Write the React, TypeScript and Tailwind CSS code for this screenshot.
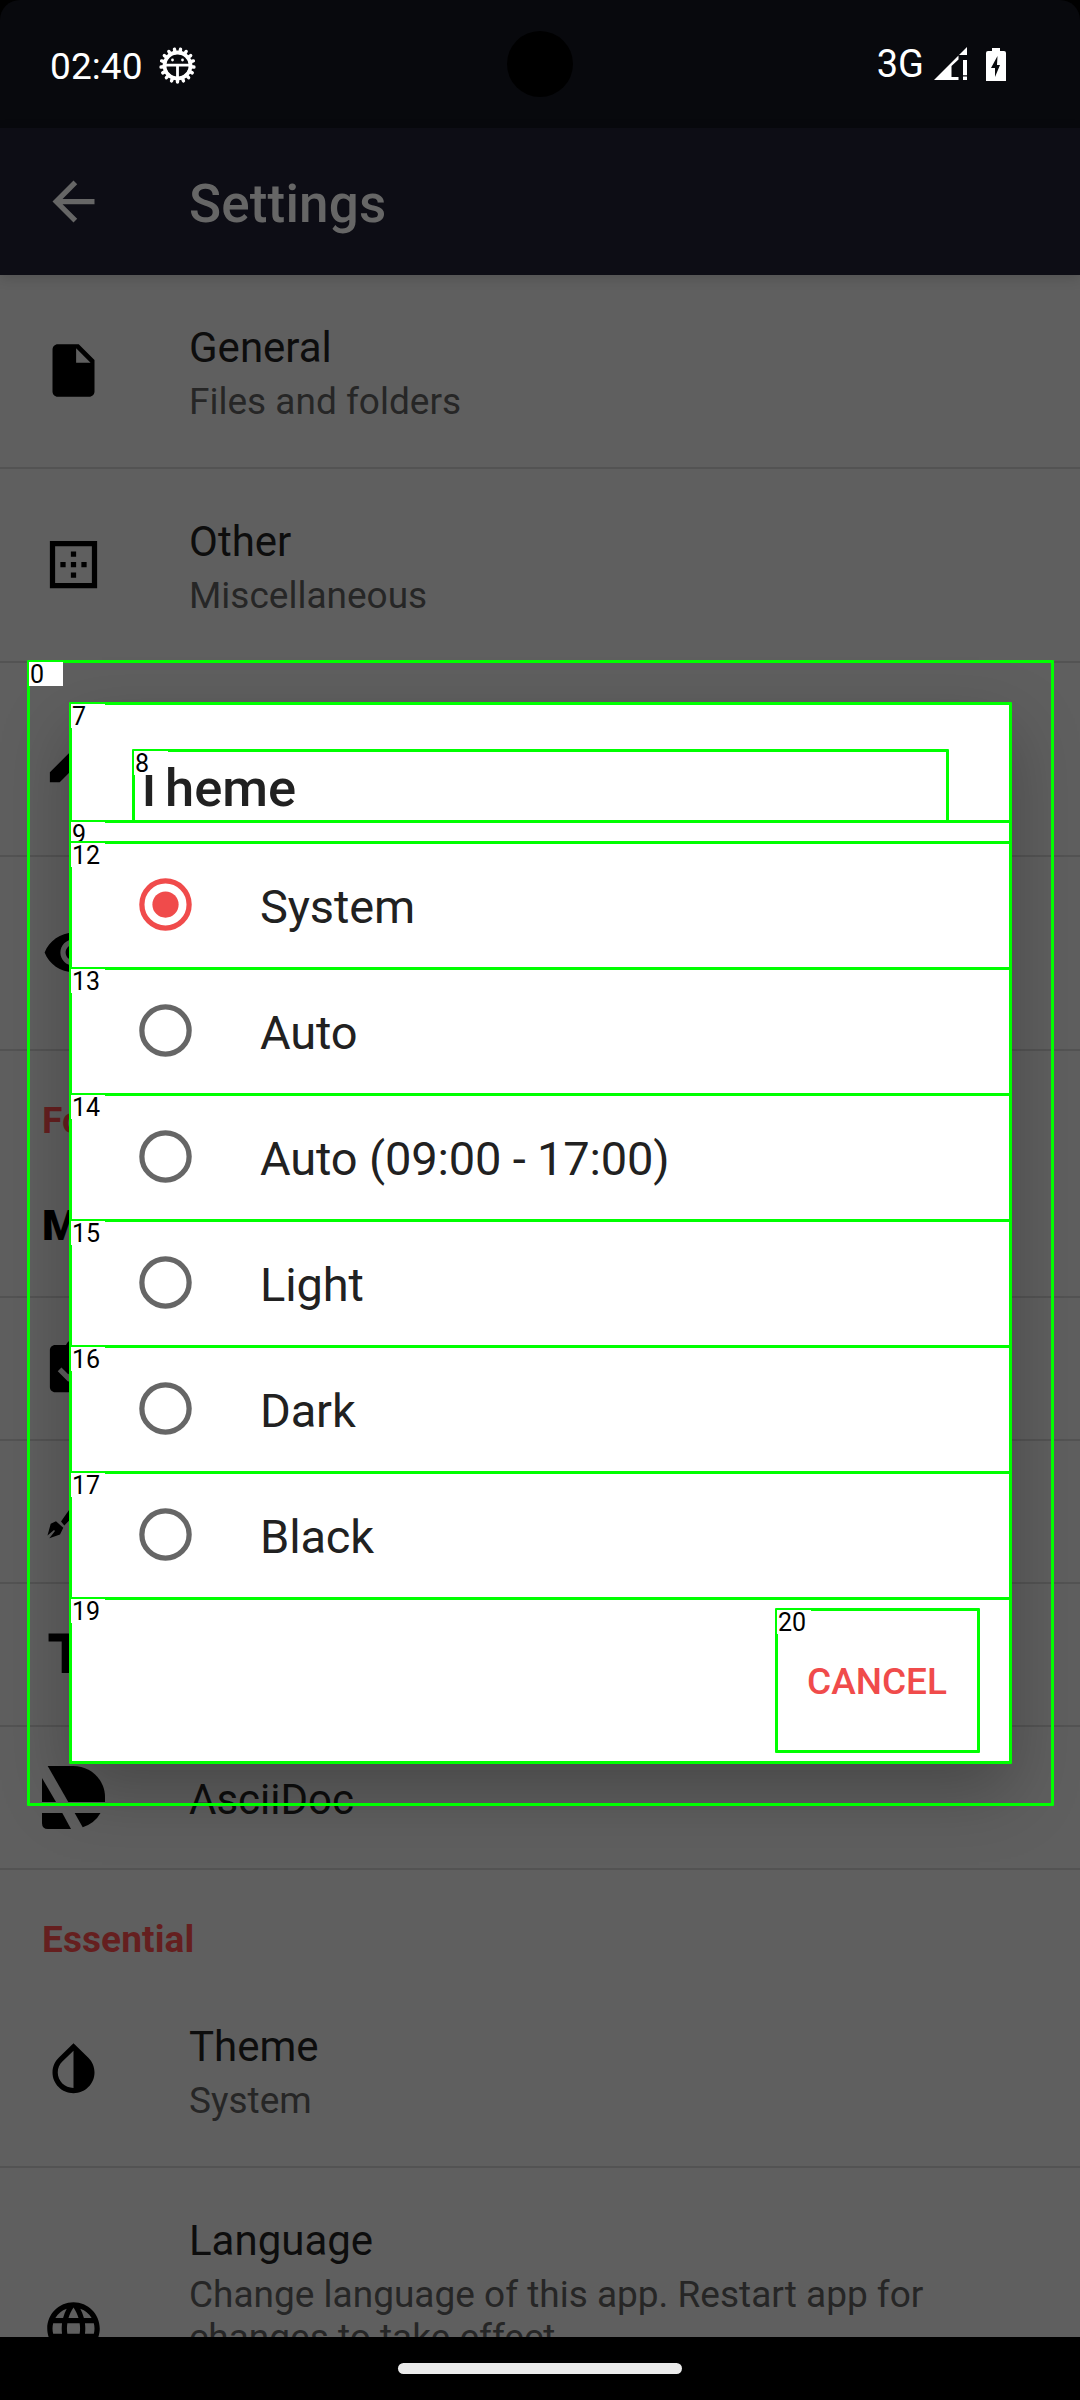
import type { ReactNode } from "react";
import {
  MdArrowBack, MdInsertDriveFile, MdBorderOuter, MdEdit, MdRemoveRedEye,
  MdAssignmentTurnedIn, MdTextFields, MdInvertColors, MdLanguage,
} from "react-icons/md";

const ICON = "size-[63px] text-black";

const TEETH = Array.from({ length: 17 }, (_, i) => (i * 360) / 17);

function DebugIcon() {
  return (
    <svg viewBox="-18.5 -18.5 37 37" className="size-[37px]">
      <circle r="13" fill="none" stroke="#fff" strokeWidth="3.8" />
      {TEETH.map((a) => (
        <path key={a} d="M0 13V16.500" stroke="#fff" strokeWidth="3.4" strokeLinecap="round" transform={`rotate(${a})`} />
      ))}
      <path d="M-13 -1.800H13V1H1.400V13H-1.400V1H-13Z" fill="#fff" />
      <circle cx="-5" cy="-5.5" r="1.4" fill="#fff" />
      <circle cx="5" cy="-5.5" r="1.4" fill="#fff" />
    </svg>
  );
}

function SignalIcon() {
  return (
    <svg viewBox="0 0 33 34" className="h-[34px] w-[33px]" fill="#fff">
      <path d="M0 33 24.500 8.500V12.500L17.500 19V30H24.500V33Z" />
      <path d="M25 8 33 0V8Z" />
      <path d="M29 13h4v15.300h-4zM29 29.500h4v3.500h-4z" />
    </svg>
  );
}

function BatteryIcon() {
  return (
    <svg viewBox="0 0 20 33" className="h-[33px] w-[20px]">
      <path d="M6 0h8v3h4q2 0 2 2V33H0V5q0-2 2-2h4z" fill="#fff" />
      <path d="M11.500 8 5 20h4v9l5-12h-3z" fill="#08090d" />
    </svg>
  );
}

function PenIcon() {
  return (
    <svg viewBox="0 0 63 63" className="size-[63px]">
      <path d="M5.500 55.500 8.700 43.800 14 41.300 21.300 47.800 18 54.500 7.300 58.200 13 51 12 50Z" />
      <path d="M19 41.500 46 3 56 11 22.300 45.500Z" />
    </svg>
  );
}

function AsciiDocIcon() {
  return (
    <svg viewBox="0 0 63 63" className="size-[63px]">
      <path d="M5.700 0H31C49 0 63 14 63 31V36H26.300Z" />
      <path d="M0 12 14 36H0Z" />
      <path d="M0 47H20.300L29 63H6Q0 63 0 57Z" />
      <path d="M32.700 47H58.500Q53 57 40.700 61.300Z" />
    </svg>
  );
}

function Row({ icon, title, sub, tall }: { icon: ReactNode; title: string; sub?: string; tall?: boolean }) {
  return (
    <div className={tall ? "flex h-[321px] shrink-0" : "flex shrink-0 border-b-2 border-[#535353]"}>
      <div className="flex w-[189px] items-center pb-px pl-[42px]">{icon}</div>
      <div className={sub ? "w-[780px] pt-12 pb-11" : "pt-12 pb-[43px]"}>
        <div className="text-[42px] leading-[50px] text-[#0d0d0d]">{title}</div>
        {sub && <div className="mt-[7px] text-[37px] leading-[43px] text-[#262626]">{sub}</div>}
      </div>
    </div>
  );
}

function Category({ children }: { children: ReactNode }) {
  return (
    <div className="h-[104px] shrink-0 pt-12 pl-[42px] text-[37px] leading-[43px] font-bold tracking-[0.1px] text-[#651f1f]">
      {children}
    </div>
  );
}

const OPTIONS = ["System", "Auto", "Auto (09:00 - 17:00)", "Light", "Dark", "Black"];

function Radio({ on }: { on: boolean }) {
  return (
    <svg
      viewBox="0 0 24 24"
      className={on ? "mb-[3px] ml-[0.5px] size-[63px] text-[#f04b4b]" : "mb-[3px] ml-[0.5px] size-[63px] text-[#666666]"}
    >
      <circle cx="12" cy="12" r="9" fill="none" stroke="currentColor" strokeWidth="2" />
      {on && <circle cx="12" cy="12" r="5" fill="currentColor" />}
    </svg>
  );
}

const BOXES = [
  { id: "0", pos: "left-[27px] top-[660px] w-[1027px] h-[1146px]" },
  { id: "7", pos: "left-[69px] top-[702px] w-[943px] h-[121px]" },
  { id: "8", pos: "left-[132px] top-[749px] w-[817px] h-[74px]" },
  { id: "9", pos: "left-[69px] top-[820px] w-[943px] h-[24px]" },
  { id: "12", pos: "left-[69px] top-[841px] w-[943px] h-[129px]" },
  { id: "13", pos: "left-[69px] top-[967px] w-[943px] h-[129px]" },
  { id: "14", pos: "left-[69px] top-[1093px] w-[943px] h-[129px]" },
  { id: "15", pos: "left-[69px] top-[1219px] w-[943px] h-[129px]" },
  { id: "16", pos: "left-[69px] top-[1345px] w-[943px] h-[129px]" },
  { id: "17", pos: "left-[69px] top-[1471px] w-[943px] h-[129px]" },
  { id: "19", pos: "left-[69px] top-[1597px] w-[943px] h-[167px]" },
  { id: "20", pos: "left-[775px] top-[1608px] w-[205px] h-[145px]" },
];

export default function App() {
  return (
    <div className="relative h-[2400px] w-[1080px] overflow-hidden bg-black font-['Roboto',sans-serif]">
      <div className="flex h-[2337px] flex-col overflow-hidden bg-[#5f5f5f]">
        <div className="h-32 shrink-0 bg-black">
          <header className="relative flex h-32 items-center rounded-t-[20px] bg-[#08090d] pr-[74px] pl-[50px] text-white">
            <span className="mt-[5px] text-[37px] leading-[43px] tracking-[0.1px]">02:40</span>
            <span className="mt-[2px] ml-[16px]"><DebugIcon /></span>
            <span className="mt-px mr-[10px] ml-auto text-[38px] leading-[43px]">3G</span>
            <SignalIcon />
            <span className="ml-[19px]"><BatteryIcon /></span>
            <div className="absolute top-[31px] left-[507px] size-[66px] rounded-full bg-black" />
          </header>
        </div>
        <div className="z-10 flex h-[147px] shrink-0 items-center bg-[#0d0d15] pl-[42px] text-[#666666] shadow-[0_3px_12px_rgba(0,0,0,0.15)]">
          <MdArrowBack className="size-[63px]" />
          <h1 className="mt-[5px] ml-[84px] text-[53px] leading-[62px] font-medium tracking-[0.15px]">Settings</h1>
        </div>
        <Row icon={<MdInsertDriveFile className={ICON} />} title="General" sub="Files and folders" />
        <Row icon={<MdBorderOuter className={ICON} />} title="Other" sub="Miscellaneous" />
        <Row icon={<MdEdit className={ICON} />} title="Edit mode" sub="Editor" />
        <Row icon={<MdRemoveRedEye className={ICON} />} title="View mode" sub="Preview" />
        <Category>Format</Category>
        <Row icon={<span className="text-[43px] leading-none font-black text-black">M</span>} title="Markdown" />
        <Row icon={<MdAssignmentTurnedIn className={ICON} />} title="todo.txt" />
        <Row icon={<PenIcon />} title="Wikitext" />
        <Row icon={<MdTextFields className={ICON} />} title="Plaintext" />
        <Row icon={<AsciiDocIcon />} title="AsciiDoc" />
        <Category>Essential</Category>
        <Row icon={<MdInvertColors className={ICON} />} title="Theme" sub="System" />
        <Row
          tall
          icon={<MdLanguage className={ICON} />}
          title="Language"
          sub="Change language of this app. Restart app for changes to take effect"
        />
      </div>
      <div className="flex h-[63px] justify-center bg-black pt-[26px]">
        <div className="h-[11px] w-[284px] rounded-full bg-[#ebebeb]" />
      </div>

      <div className="absolute top-[703px] left-[70px] flex h-[1060px] w-[941px] flex-col bg-white shadow-[0_28px_65px_rgba(0,0,0,0.25)]">
        <h2 className="h-[140px] pt-[54px] pl-[63px] text-[52.5px] leading-[62px] font-medium text-[#212121]">Theme</h2>
        {OPTIONS.map((label, i) => (
          <div key={label} className="flex h-[126px] shrink-0 items-center pl-[63px] text-[47px] tracking-[-0.15px] text-[#212121]">
            <Radio on={i === 0} />
            <span className="mt-[2px] ml-[63.5px]">{label}</span>
          </div>
        ))}
        <div className="flex h-[163px] items-center justify-end pr-[64px]">
          <button className="mt-[2px] text-[37px] font-medium text-[#f04b4b]">CANCEL</button>
        </div>
      </div>

      {BOXES.map((b) => (
        <div key={b.id} className={`absolute rounded-[1px] border-3 border-[#00ff00] ${b.pos}`}>
          <span className="-mt-px -ml-px flex h-6 w-[34px] bg-white pl-px font-['Roboto',sans-serif] text-[25px] leading-[25px] text-black">
            {b.id}
          </span>
        </div>
      ))}
    </div>
  );
}
